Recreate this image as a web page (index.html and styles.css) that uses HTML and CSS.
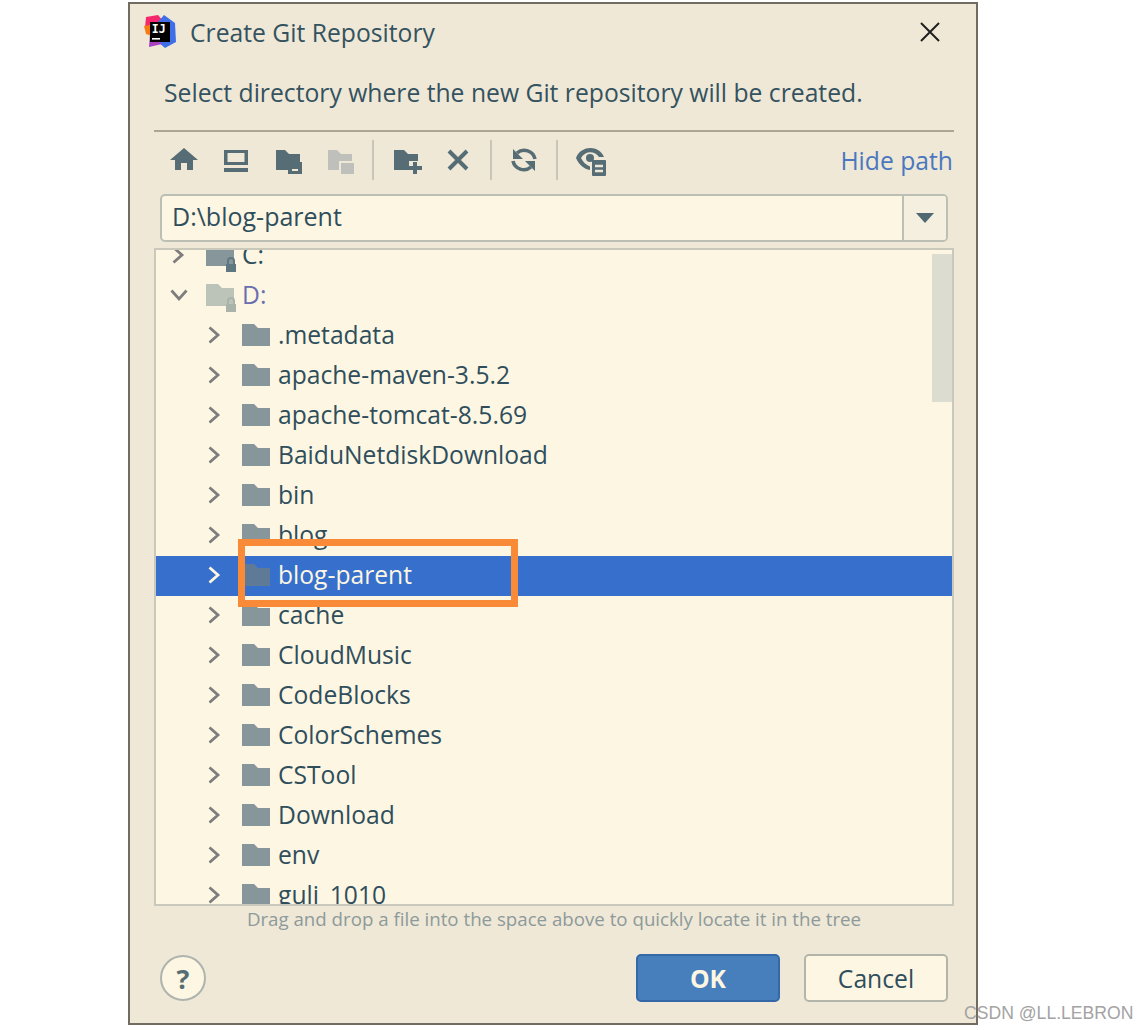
FILE: index.html
```html
<!DOCTYPE html>
<html lang="en">
<head>
<meta charset="utf-8">
<title>Create Git Repository</title>
<link rel="stylesheet" href="styles.css">
</head>
<body>
<div class="dialog">
  <header class="titlebar">
    <svg class="logo" viewBox="0 0 34 34" width="34" height="34">
      <polygon points="2,3 14,1 20,8 6,20 1,14" fill="#f5286e"/>
      <polygon points="20,1 31,9 32,28 21,34 14,28 14,8" fill="#3f6fe8"/>
      <polygon points="0,12 6,11 8,22 2,20" fill="#f97a12"/>
      <polygon points="6,20 12,24 18,30 5,33" fill="#a83fc4"/>
      <rect x="6" y="8" width="20" height="20" fill="#000"/>
      <rect x="8" y="24" width="8" height="1.600" fill="#fff"/>
      <text x="7.800" y="19" class="logo-text">IJ</text>
    </svg>
    <span class="title">Create Git Repository</span>
    <svg class="close" viewBox="0 0 20 20" width="20" height="20"><path d="M1 1 19 19M19 1 1 19" stroke="#1f1f1f" stroke-width="2" fill="none"/></svg>
  </header>
  <p class="prompt">Select directory where the new Git repository will be created.</p>
  <div class="rule"></div>
  <div class="toolbar">
    <svg class="tool" viewBox="0 0 28 28"><path d="M14 2 0 14H5V24H11V17H17V24H23V14H28Z" fill="#566d75"/></svg>
    <svg class="tool" viewBox="0 0 28 28"><path d="M2 4H26V19H2ZM5.500 7V16H22.500V7ZM2 22H26V26H2Z" fill="#566d75" fill-rule="evenodd"/></svg>
    <svg class="tool" viewBox="0 0 28 28"><path d="M2 4H11L15 8H26V16H14V24H2Z" fill="#566d75"/><path d="M14 16H28V28H14Z" fill="#566d75"/><rect x="18" y="23" width="6" height="2" fill="#efe8d6"/></svg>
    <svg class="tool" viewBox="0 0 28 28"><path d="M2 4H11L15 8H26V15H13V24H2Z" fill="#bfbfbc"/><path d="M15 17H28V28H15Z" fill="#bfbfbc"/></svg>
    <span class="sep"></span>
    <svg class="tool tool-add" viewBox="0 0 28 28"><path d="M0 4H10L14 8H24V15H15V24H0Z" fill="#566d75"/><path d="M19 16H23V20H28V24H23V28H19V24H15V20H19Z" fill="#566d75"/></svg>
    <svg class="tool tool-x" viewBox="0 0 24 24"><path d="M3 3 21 21M21 3 3 21" stroke="#566d75" stroke-width="4" fill="none"/></svg>
    <span class="sep sep-b"></span>
    <svg class="tool tool-sync" viewBox="0 0 28 28"><path d="M25 13A11 11 0 0 0 7 7M3 15A11 11 0 0 0 21 21" stroke="#566d75" stroke-width="3.600" fill="none"/><path d="M3 3V13H13ZM25 25V15H15Z" fill="#566d75"/></svg>
    <span class="sep sep-c"></span>
    <svg class="tool tool-eye" viewBox="0 0 32 32"><path d="M0 14C5 1 23 1 28 13H23C19 6.500 9 6.500 5 14 7 18 10 21 14 22.500V26C8 25 3 21 0 14Z" fill="#566d75"/><circle cx="14" cy="14" r="4" fill="#566d75"/><rect x="16" y="16" width="14" height="16" rx="1" fill="#566d75"/><path d="M19 22H27M19 27H27" stroke="#efe8d6" stroke-width="2.500"/></svg>
    <span class="hide-path">Hide path</span>
  </div>
  <div class="combo">
    <span class="combo-value">D:\blog-parent</span>
    <span class="combo-btn"><svg viewBox="0 0 18 10" width="18" height="10"><path d="M0 0H18L9 10Z" fill="#4f6871"/></svg></span>
  </div>
  <div class="tree">
    <ul class="rows">
      <li class="row root"><svg class="chev" viewBox="0 0 12 18"><path d="M1.500 1.500 10 9 1.500 16.500"/></svg><svg class="folder" viewBox="0 0 28 22"><path d="M0 0H12L16 4H28V22H0Z"/><path class="shackle" d="M22 20V17A3 3 0 0 1 28 17V20"/><rect class="lock" x="20" y="20" width="10" height="8"/></svg><span>C:</span></li>
      <li class="row root is-module"><svg class="chev down" viewBox="0 0 18 12"><path d="M1.500 1.500 9 10 16.500 1.500"/></svg><svg class="folder" viewBox="0 0 28 22"><path d="M0 0H12L16 4H28V22H0Z"/><path class="shackle" d="M22 20V17A3 3 0 0 1 28 17V20"/><rect class="lock" x="20" y="20" width="10" height="8"/></svg><span>D:</span></li>
      <li class="row"><svg class="chev" viewBox="0 0 12 18"><path d="M1.500 1.500 10 9 1.500 16.500"/></svg><svg class="folder" viewBox="0 0 28 22"><path d="M0 0H12L16 4H28V22H0Z"/></svg><span>.metadata</span></li>
      <li class="row"><svg class="chev" viewBox="0 0 12 18"><path d="M1.500 1.500 10 9 1.500 16.500"/></svg><svg class="folder" viewBox="0 0 28 22"><path d="M0 0H12L16 4H28V22H0Z"/></svg><span>apache-maven-3.5.2</span></li>
      <li class="row"><svg class="chev" viewBox="0 0 12 18"><path d="M1.500 1.500 10 9 1.500 16.500"/></svg><svg class="folder" viewBox="0 0 28 22"><path d="M0 0H12L16 4H28V22H0Z"/></svg><span>apache-tomcat-8.5.69</span></li>
      <li class="row"><svg class="chev" viewBox="0 0 12 18"><path d="M1.500 1.500 10 9 1.500 16.500"/></svg><svg class="folder" viewBox="0 0 28 22"><path d="M0 0H12L16 4H28V22H0Z"/></svg><span>BaiduNetdiskDownload</span></li>
      <li class="row"><svg class="chev" viewBox="0 0 12 18"><path d="M1.500 1.500 10 9 1.500 16.500"/></svg><svg class="folder" viewBox="0 0 28 22"><path d="M0 0H12L16 4H28V22H0Z"/></svg><span>bin</span></li>
      <li class="row"><svg class="chev" viewBox="0 0 12 18"><path d="M1.500 1.500 10 9 1.500 16.500"/></svg><svg class="folder" viewBox="0 0 28 22"><path d="M0 0H12L16 4H28V22H0Z"/></svg><span>blog</span></li>
      <li class="row selected"><svg class="chev" viewBox="0 0 12 18"><path d="M1.500 1.500 10 9 1.500 16.500"/></svg><svg class="folder" viewBox="0 0 28 22"><path d="M0 0H12L16 4H28V22H0Z"/></svg><span>blog-parent</span></li>
      <li class="row"><svg class="chev" viewBox="0 0 12 18"><path d="M1.500 1.500 10 9 1.500 16.500"/></svg><svg class="folder" viewBox="0 0 28 22"><path d="M0 0H12L16 4H28V22H0Z"/></svg><span>cache</span></li>
      <li class="row"><svg class="chev" viewBox="0 0 12 18"><path d="M1.500 1.500 10 9 1.500 16.500"/></svg><svg class="folder" viewBox="0 0 28 22"><path d="M0 0H12L16 4H28V22H0Z"/></svg><span>CloudMusic</span></li>
      <li class="row"><svg class="chev" viewBox="0 0 12 18"><path d="M1.500 1.500 10 9 1.500 16.500"/></svg><svg class="folder" viewBox="0 0 28 22"><path d="M0 0H12L16 4H28V22H0Z"/></svg><span>CodeBlocks</span></li>
      <li class="row"><svg class="chev" viewBox="0 0 12 18"><path d="M1.500 1.500 10 9 1.500 16.500"/></svg><svg class="folder" viewBox="0 0 28 22"><path d="M0 0H12L16 4H28V22H0Z"/></svg><span>ColorSchemes</span></li>
      <li class="row"><svg class="chev" viewBox="0 0 12 18"><path d="M1.500 1.500 10 9 1.500 16.500"/></svg><svg class="folder" viewBox="0 0 28 22"><path d="M0 0H12L16 4H28V22H0Z"/></svg><span>CSTool</span></li>
      <li class="row"><svg class="chev" viewBox="0 0 12 18"><path d="M1.500 1.500 10 9 1.500 16.500"/></svg><svg class="folder" viewBox="0 0 28 22"><path d="M0 0H12L16 4H28V22H0Z"/></svg><span>Download</span></li>
      <li class="row"><svg class="chev" viewBox="0 0 12 18"><path d="M1.500 1.500 10 9 1.500 16.500"/></svg><svg class="folder" viewBox="0 0 28 22"><path d="M0 0H12L16 4H28V22H0Z"/></svg><span>env</span></li>
      <li class="row"><svg class="chev" viewBox="0 0 12 18"><path d="M1.500 1.500 10 9 1.500 16.500"/></svg><svg class="folder" viewBox="0 0 28 22"><path d="M0 0H12L16 4H28V22H0Z"/></svg><span>guli_1010</span></li>
    </ul>
    <div class="scroll-thumb"></div>
  </div>
  <p class="hint">Drag and drop a file into the space above to quickly locate it in the tree</p>
  <footer class="footer">
    <span class="help">?</span>
    <span class="btn btn-ok">OK</span>
    <span class="btn btn-cancel">Cancel</span>
  </footer>
  <div class="callout"></div>
</div>
<div class="watermark">CSDN @LL.LEBRON</div>
</body>
</html>
```
FILE: styles.css
```css
* { box-sizing: border-box; }
html, body { margin: 0; padding: 0; background: #fff; }
body {
  position: relative;
  width: 1146px;
  height: 1030px;
  overflow: hidden;
  padding: 2px 0 0 128px;
  font-family: "Open Sans", "Noto Sans", sans-serif;
  color: #2f4e5c;
}
.dialog {
  position: relative;
  width: 850px;
  height: 1023px;
  background: #efe8d6;
  border: 2px solid #706c62;
  padding: 0 22px 0 24px;
  display: flex;
  flex-direction: column;
}
.titlebar {
  height: 56px;
  display: flex;
  align-items: center;
  margin: 0 -22px 0 -24px;
  padding: 0 36px 0 14px;
}
.logo { flex: none; margin-top: -3px; }
.logo-text { font: 700 11.500px "DejaVu Sans Mono", monospace; fill: #fff; }
.title { font-size: 24.700px; margin-left: 12px; flex: 1; color: #34525f; }
.close { flex: none; }
.prompt {
  margin: 0 0 0 10px;
  height: 70px;
  line-height: 66px;
  font-size: 24.700px;
  white-space: nowrap;
  color: #34525f;
}
.rule { height: 2px; background: #aaa595; flex: none; }
.toolbar {
  height: 60px;
  display: flex;
  align-items: center;
  flex: none;
  padding: 0 1px 4px 16px;
}
.tool { width: 28px; height: 28px; flex: none; margin-right: 24px; }
.sep { width: 2px; height: 40px; background: #c8c6ba; flex: none; margin: 0 20px 0 -6px; }
.tool-x { margin-right: 20px; width: 24px; height: 24px; }
.sep-b { margin: 0 18px 0 0; }
.tool-sync { margin-right: 18px; }
.sep-c { margin: 0 18px 0 0; }
.tool-eye { width: 32px; height: 32px; margin: 0; }
.hide-path { margin-left: auto; font-size: 24.700px; color: #4a78c0; }
.combo {
  height: 48px;
  margin: 2px 6px 0 6px;
  display: flex;
  flex: none;
  background: #fdf6e3;
  border: 2px solid #bcc0b4;
  border-radius: 5px;
  overflow: hidden;
}
.combo-value { flex: 1; padding-left: 10px; font-size: 25px; line-height: 41px; }
.combo-btn {
  width: 44px;
  background: #f5efdf;
  border-left: 2px solid #bcc0b4;
  display: flex;
  align-items: center;
  justify-content: center;
}
.tree {
  position: relative;
  height: 658px;
  margin-top: 6px;
  flex: none;
  background: #fdf6e3;
  border: 2px solid #c9c8bb;
  overflow: hidden;
}
.rows { list-style: none; margin: -14px 0 0; padding: 0; }
.row {
  height: 40px;
  display: flex;
  align-items: center;
  padding: 0 0 2px 86px;
  font-size: 24.650px;
  color: #2f4e5c;
  white-space: nowrap;
}
.row span { margin: 0 0 2px 8px; }
.root { padding-left: 50px; }
.chev { width: 12px; height: 18px; flex: none; margin-left: -34px; margin-right: 22px; overflow: visible; }
.chev path { fill: none; stroke: #7d7d7d; stroke-width: 2.800; }
.chev.down { width: 18px; height: 12px; margin-left: -36px; margin-right: 18px; }
.folder { width: 28px; height: 22px; flex: none; overflow: visible; }
.folder path { fill: #87969a; }
.folder .shackle { fill: none; stroke: #5f7781; stroke-width: 2; }
.lock { fill: #5f7781; }
.is-module span { color: #6a6fb0; }
.is-module .folder path { fill: #bcc3b8; }
.is-module .folder .shackle { fill: none; stroke: #a9b3aa; }
.is-module .lock { fill: #a9b3aa; }
.selected { background: #3670cc; color: #fdf6e3; }
.selected .chev path { stroke: #fdf6e3; }
.selected .folder path { fill: #5f7a96; }
.scroll-thumb {
  position: absolute;
  top: 4px;
  right: 0;
  width: 20px;
  height: 148px;
  background: #dddcd0;
}
.hint {
  margin: 0;
  height: 27px;
  line-height: 25px;
  text-align: center;
  font-size: 18.700px;
  color: #8d9a9b;
  white-space: nowrap;
  flex: none;
}
.footer {
  display: flex;
  align-items: center;
  flex: none;
  margin: 0 6px 0 6px;
  padding-top: 20px;
  height: 70px;
}
.help {
  width: 46px;
  height: 46px;
  border-radius: 50%;
  background: #fdf6e3;
  border: 2px solid #aeb4ad;
  display: flex;
  align-items: center;
  justify-content: center;
  font-size: 27px;
  font-weight: 700;
  color: #566d75;
  margin-right: auto;
}
.btn {
  height: 48px;
  border-radius: 5px;
  display: flex;
  align-items: center;
  justify-content: center;
  font-size: 24.700px;
}
.btn-ok {
  width: 144px;
  background: #467fbb;
  border: 2px solid #3568a8;
  color: #fdf6e3;
  font-weight: 700;
  margin-right: 24px;
}
.btn-cancel {
  width: 144px;
  background: #fdf6e3;
  border: 2px solid #b3b5ab;
  color: #2f4e5c;
}
.callout {
  position: absolute;
  left: 108px;
  top: 535px;
  width: 280px;
  height: 68px;
  border: 7px solid #f98a37;
  pointer-events: none;
}
.watermark {
  position: absolute;
  left: 964px;
  top: 1002px;
  font-family: "Liberation Sans", sans-serif;
  font-size: 17.600px;
  line-height: 22px;
  color: #a3a3a3;
  white-space: nowrap;
}
```
